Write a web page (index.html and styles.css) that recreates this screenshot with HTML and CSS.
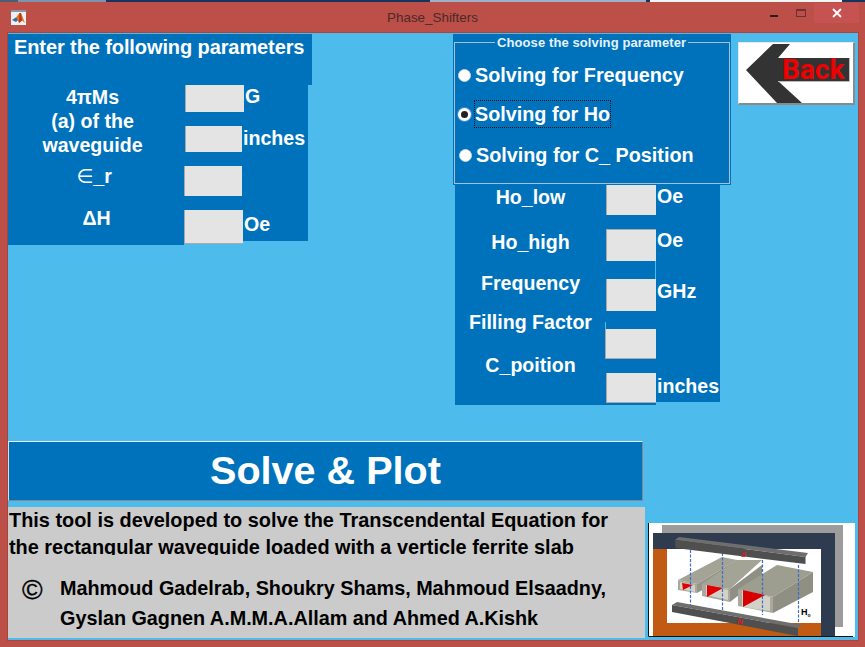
FILE: index.html
```html
<!DOCTYPE html>
<html lang="en">
<head>
<meta charset="utf-8">
<title>Phase_Shifters</title>
<link rel="stylesheet" href="styles.css">
</head>
<body>
<div class="window">
  <div class="desktop-strip"><span class="strip-a"></span><span class="strip-b"></span><span class="strip-c"></span><span class="strip-d"></span></div>
  <header class="titlebar">
    <svg class="app-icon" viewBox="0 0 15 15" aria-hidden="true">
      <rect x="0" y="0" width="15" height="15" fill="#eef0f3"/>
      <rect x="0" y="0" width="15" height="2" fill="#8b97aa"/>
      <path d="M1 10 L5 7.5 L8.5 3 L10 3 L14 13 L11 10.5 L8 13 L6 9.5 Z" fill="#e2761f"/>
      <path d="M1 10 L5 7.5 L7 10 L5 12 Z" fill="#2f6fb5"/>
      <path d="M8.5 3 L10 3 L11 10.5 L8 13 Z" fill="#b8341b"/>
    </svg>
    <div class="title">Phase_Shifters</div>
    <div class="controls">
      <span class="ctl-min"></span>
      <span class="ctl-max"></span>
      <span class="ctl-close">
        <svg viewBox="0 0 10 10" width="10" height="10" aria-hidden="true"><path d="M1 1 L9 9 M9 1 L1 9" stroke="#fff" stroke-width="1.8"/></svg>
      </span>
    </div>
  </header>
  <main class="client">
    <div class="upper">
      <section class="left-panel">
        <h1 class="panel-head">Enter the following parameters</h1>
        <div class="left-body">
          <div class="left-labels">
            <div class="lab lab-ms">4πMs</div>
            <div class="lab lab-a">(a) of the<br>waveguide</div>
            <div class="lab lab-er"><span class="thin">∈</span>_r</div>
            <div class="lab lab-dh">ΔH</div>
          </div>
          <div class="left-fields">
            <div class="frow fr-1"><input class="box box-1" type="text" aria-label="4πMs"><span class="unit">G</span></div>
            <div class="frow fr-2"><input class="box box-2" type="text" aria-label="a"><span class="unit">inches</span></div>
            <div class="frow fr-3"><input class="box box-3" type="text" aria-label="er"></div>
            <div class="frow fr-4"><input class="box box-4" type="text" aria-label="dH"><span class="unit unit-oe">Oe</span></div>
          </div>
        </div>
      </section>
      <section class="right-col">
        <fieldset class="solver">
          <legend class="solver-legend">Choose the solving parameter</legend>
          <div class="radio r1"><span class="dot"></span><span class="rtext">Solving for Frequency</span></div>
          <div class="radio r2"><span class="dot on"></span><span class="rtext focus">Solving for Ho</span></div>
          <div class="radio r3"><span class="dot"></span><span class="rtext">Solving for C_ Position</span></div>
        </fieldset>
        <div class="right-body">
          <div class="right-labels">
            <div class="lab rl-1">Ho_low</div>
            <div class="lab rl-2">Ho_high</div>
            <div class="lab rl-3">Frequency</div>
            <div class="lab rl-4">Filling Factor</div>
            <div class="lab rl-5">C_poition</div>
          </div>
          <div class="right-fields">
            <div class="frow rr-1"><input class="box rb-1" type="text" aria-label="Ho_low"><span class="unit">Oe</span></div>
            <div class="frow rr-2"><input class="box rb-2" type="text" aria-label="Ho_high"><span class="unit">Oe</span></div>
            <div class="frow rr-3"><input class="box rb-3" type="text" aria-label="Frequency"><span class="unit">GHz</span></div>
            <div class="frow rr-4"><input class="box rb-4" type="text" aria-label="Filling"></div>
            <div class="frow rr-5"><input class="box rb-5" type="text" aria-label="C"><span class="unit">inches</span></div>
          </div>
        </div>
      </section>
      <button class="back" type="button">
        <svg class="back-arrow" viewBox="0 0 114 60" aria-hidden="true">
          <path d="M7 27 L34 1 L51 1 L39 15 L110 15 L110 38 L39 38 L63 60 L38 60 Z" fill="#333"/>
          <path d="M39 38.5 H110.5 V15" fill="none" stroke="#bbb" stroke-width="1"/>
        </svg>
        <span class="back-text">Back</span>
      </button>
    </div>
    <div class="lower">
      <div class="lower-main">
        <button class="solve" type="button">Solve &amp; Plot</button>
        <div class="info">
          <p class="desc">This tool is developed to solve the Transcendental Equation for<br><span class="clip">the rectangular waveguide loaded with a verticle ferrite slab</span></p>
          <div class="credit">
            <span class="copy">©</span>
            <p class="names">Mahmoud Gadelrab, Shoukry Shams, Mahmoud Elsaadny,<br>Gyslan Gagnen A.M.M.A.Allam and Ahmed A.Kishk</p>
          </div>
        </div>
      </div>
      <svg class="diagram" viewBox="0 0 207 114" aria-label="Phase shifter diagram">
        <rect x="0" y="0" width="207" height="114" fill="#fff"/>
        <rect x="14" y="2" width="181" height="102" fill="#9c9c9c"/>
        <rect x="5" y="10" width="182" height="103" fill="#2f3c50"/>
        <rect x="5" y="26" width="168" height="87" fill="#c15a12"/>
        <rect x="19" y="26" width="154" height="74" fill="#fff"/>
        <path d="M0.5 0 V113.5 H205" fill="none" stroke="#111"/>

        <path d="M30 57 L74 34 L89 37 L49 61 Z" fill="#a3a396"/>
        <path d="M49 61 L89 37 L89 48 L49 70 Z" fill="#95958a"/>
        <path d="M30 57 L49 61 L49 70 L30 67 Z" fill="#a9a99d"/>
        <path d="M32 59 L47 62 L47 69 L32 66 Z" fill="#d2d2c8"/>
        <path d="M34 60 L45 62 L35 67 Z" fill="#e00000"/>

        <path d="M54 61 L89 37 L114 37 L82 66 Z" fill="#a3a396"/>
        <path d="M82 66 L114 42 L114 54 L82 79 Z" fill="#8f8f83"/>
        <path d="M54 61 L82 66 L82 79 L54 73 Z" fill="#a9a99d"/>
        <path d="M58 62 L80 67 L80 77 L58 72 Z" fill="#d2d2c8"/>
        <path d="M59 62 L75 65 L59 74 Z" fill="#e00000"/>

        <path d="M90 66 L129 42 L165 49 L125 74 Z" fill="#9d9d90"/>
        <path d="M125 74 L165 49 L165 69 L125 90 Z" fill="#8f8f83"/>
        <path d="M90 66 L125 74 L125 90 L90 83 Z" fill="#a9a99d"/>
        <path d="M94 67 L122 74 L122 88 L94 84 Z" fill="#d2d2c8"/>
        <path d="M95 67 L117 72 L95 84 Z" fill="#d60000"/>

        <path d="M42.5 27 V82 M74.5 30 V87 M114.5 37 V92 M150.5 42 V100" stroke="#3f6fc9" stroke-width="1.2" stroke-dasharray="3 1.5"/>

        <path d="M27 17 L31 14 L160 30 L157.5 34 Z" fill="#6e6e6e"/>
        <path d="M27 17 L157.5 34 L157.5 41 L27.5 25 Z" fill="#4f4f4f"/>
        <path d="M24 82 L29 79 L154 102 L150 105 Z" fill="#6e6e6e"/>
        <path d="M24 82 L150 105 L150 113 L24 89 Z" fill="#4f4f4f"/>
        <text x="93" y="34" class="pole">S</text>
        <text x="89" y="101" class="pole">N</text>
        <text x="153" y="92" class="hlabel">H<tspan class="hsub" dy="2">o</tspan></text>
      </svg>
    </div>
  </main>
</div>
</body>
</html>
```
FILE: styles.css
```css
* { box-sizing: border-box; }
html, body { margin: 0; padding: 0; }
body { width: 865px; height: 647px; overflow: hidden; background: #bc4f48; font-family: "Liberation Sans", Arial, sans-serif; }
.window { width: 865px; height: 647px; display: flex; flex-direction: column; background: #bc4f48; }

.desktop-strip { height: 2px; display: flex; background: #17345f; flex: none; }
.strip-a { width: 18px; background: #4c5d77; }
.strip-b { width: 88px; background: #7e93b0; }
.strip-c { width: 216px; margin-left: 324px; background: #9fb1c8; }
.strip-d { width: 192px; margin-left: 4px; background: #f4f4f4; }

.titlebar { height: 31px; display: flex; align-items: flex-start; position: relative; padding-left: 11px; flex: none; }
.app-icon { width: 15px; height: 15px; flex: none; margin-top: 8px; }
.title { position: absolute; left: 0; right: 0; top: 8px; text-align: center; font: 13.4px/16px "Liberation Sans", Arial, sans-serif; color: #4a2a27; }
.controls { margin-left: auto; display: flex; align-items: flex-start; margin-right: 6px; }
.ctl-min { width: 8px; height: 2px; background: #222; margin-top: 13px; margin-right: 18px; }
.ctl-max { width: 10px; height: 8px; border: 1px solid #6e3030; border-top-width: 2px; margin-top: 7px; margin-right: 8px; }
.ctl-close { width: 45px; height: 20px; background: #c65352; display: flex; align-items: center; justify-content: center; margin-top: 1px; }

.client { flex: 1; margin: 0 7px 7px 8px; background: #4dbbec; display: flex; flex-direction: column; box-shadow: 0 0 0 1px #a8453f; }
.upper { height: 408px; display: flex; align-items: flex-start; flex: none; }

.left-panel { width: 304px; margin-top: 1px; flex: none; color: #fff; }
.panel-head { margin: 0; height: 51px; background: #0072bc; padding: 3px 0 0 6px; font: bold 20px/21px "Liberation Sans", Arial, sans-serif; letter-spacing: -0.1px; color: #fff; }
.left-body {
  width: 300px; height: 160px; display: flex;
  background:
    linear-gradient(#0072bc, #0072bc) left top / 176px 100% no-repeat,
    linear-gradient(#0072bc, #0072bc) right top / 124px 156px no-repeat;
}

.lab { text-align: center; color: #fff; font-weight: bold; font-size: 19.6px; line-height: 24px; white-space: nowrap; }
.left-labels { width: 177px; flex: none; padding-right: 8px; }
.lab-er { margin-top: 7px; padding-left: 3px; }
.lab-dh { margin-top: 17px; padding-left: 8px; }
.thin { font-family: "DejaVu Sans", sans-serif; font-weight: normal; }

.left-fields, .right-fields { flex: none; display: flex; flex-direction: column; }
.frow { display: flex; align-items: flex-start; position: relative; }
.box { display: block; flex: none; margin: 0; padding: 0; background: #e4e4e4; border: 0; border-radius: 0; border-left: 1px solid #a9a9a9; }
.unit { color: #fff; font-weight: bold; font-size: 19.6px; line-height: 22px; margin-left: 1px; }
.box-1 { width: 59px; height: 27px; }
.box-2 { width: 57px; height: 26px; }
.box-3 { width: 58px; height: 30px; }
.box-4 { width: 59px; height: 34px; border-bottom: 1px solid #a9a9a9; }
.fr-1 { height: 41px; }
.fr-2 { height: 40px; }
.fr-2 .unit { margin-top: 1px; }
.fr-3 { height: 44px; margin-left: -1px; }
.fr-4 { margin-left: -1px; }
.fr-4 .unit-oe { margin-top: 3px; }

.right-col { width: 278px; margin-left: 141px; margin-top: 1px; flex: none; }
.solver { margin: 0; padding: 0; width: 278px; height: 151px; background: #0072bc; border: 0; position: relative; display: block; min-width: 0; }
.solver::before { content: ""; position: absolute; left: 1px; right: 1px; top: 8px; bottom: 1px; border: 1px solid #a7bfd2; pointer-events: none; }
.solver-legend { position: absolute; left: 42px; top: 2px; padding: 0 2px; background: #0072bc; color: #e6f2fa; font-weight: bold; font-size: 13px; line-height: 14px; letter-spacing: 0.1px; z-index: 1; white-space: nowrap; }
.radio { display: flex; align-items: center; position: absolute; color: #fff; font-weight: bold; font-size: 19.8px; line-height: 24px; }
.r1 { left: 5px; top: 29px; }
.r2 { left: 5px; top: 67px; }
.r3 { left: 6px; top: 109px; }
.rtext { margin-left: 4px; white-space: nowrap; }
.focus { outline: 1px dotted #111; outline-offset: 0; line-height: 26px; }
.dot { width: 13px; height: 13px; border-radius: 50%; background: #fff; border: 1px solid #c8d6e0; flex: none; }
.dot.on { background: #222; border: 3px solid #fff; box-shadow: 0 0 0 1px #3d8ee0; }

.right-body {
  width: 265px; height: 220px; margin-left: 2px; display: flex;
  background:
    linear-gradient(#0072bc, #0072bc) left top / 201px 100% no-repeat,
    linear-gradient(#0072bc, #0072bc) right top / 64px 217px no-repeat;
}
.right-labels { width: 151px; flex: none; }
.rl-2 { margin-top: 21px; }
.rl-3 { margin-top: 17px; }
.rl-4 { margin-top: 15px; }
.rl-5 { margin-top: 19px; }
.rb-1 { width: 50px; height: 30px; }
.rb-2 { width: 50px; height: 32px; border-top: 1px solid #a9a9a9; }
.rb-3 { width: 50px; height: 32px; }
.rb-4 { width: 51px; height: 30px; border-bottom: 1px solid #a9a9a9; }
.rb-5 { width: 50px; height: 30px; border-bottom: 1px solid #a9a9a9; }
.rr-1 { height: 44px; }
.rr-2 { height: 50px; }
.rr-3 { height: 50px; }
.rr-4 { height: 44px; margin-left: -1px; }
.rr-2::after { content: ""; position: absolute; left: 49px; top: 32px; width: 1px; height: 18px; background: #4dbbec; }
.rr-4::before { content: ""; position: absolute; left: 0; top: -7px; width: 1px; height: 7px; background: #4dbbec; }
.rr-3 .unit { margin-top: 1px; }
.rr-5 .unit { margin-top: 2px; }

.back { width: 117px; height: 63px; margin: 9px 0 0 7px; padding: 0; flex: none; background: #fff; border: 1px solid #e8e8e8; border-right: 2px solid #8a8a8a; border-bottom: 2px solid #8a8a8a; position: relative; display: block; }
.back-arrow { display: block; width: 114px; height: 60px; }
.back-text { position: absolute; left: 43px; top: 11px; color: #f00000; font-family: "Roboto", "Liberation Sans", sans-serif; font-weight: bold; font-size: 28px; line-height: 32px; }

.lower { flex: 1; display: flex; align-items: flex-start; }
.lower-main { width: 637px; flex: none; }
.solve { display: block; width: 635px; height: 60px; margin: 0; padding: 0; background: #0072bc; color: #fff; border: 0; border-top: 1px solid #e8f2f8; border-left: 1px solid #cfe4f0; border-right: 1px solid #888; border-bottom: 1px solid #888; font: bold 39.6px/1 "Liberation Sans", Arial, sans-serif; }
.info { width: 637px; height: 131px; margin-top: 6px; background: #cbcbcb; color: #000; font-weight: bold; display: flex; flex-direction: column; }
.desc { margin: 0; padding-left: 1px; font-size: 19.9px; line-height: 27px; white-space: nowrap; }
.clip { display: inline-block; height: 21px; overflow: hidden; vertical-align: top; }
.credit { display: flex; align-items: flex-start; margin-top: 12px; }
.copy { width: 52px; padding-left: 14px; flex: none; font-size: 28px; line-height: 34px; font-weight: normal; -webkit-text-stroke: 0.3px #000; }
.names { margin: 0; font-size: 19.8px; line-height: 30px; white-space: nowrap; }

.diagram { width: 207px; height: 114px; margin: 82px 0 0 3px; flex: none; display: block; }
.pole { font: italic bold 8px "Liberation Sans", Arial, sans-serif; fill: #e01818; }
.hlabel { font: bold 9px "Liberation Sans", Arial, sans-serif; fill: #000; }
.hsub { font-size: 5px; }
```
